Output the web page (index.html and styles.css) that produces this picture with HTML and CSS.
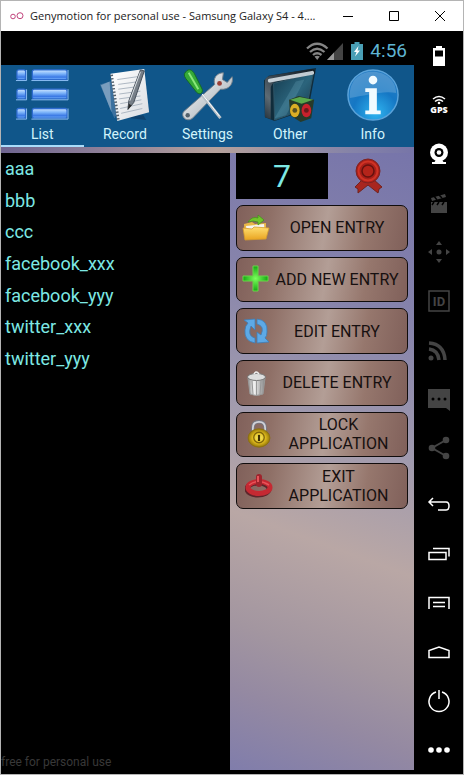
FILE: index.html
```html
<!DOCTYPE html>
<html lang="en">
<head>
<meta charset="utf-8">
<meta name="viewport" content="width=device-width, initial-scale=1">
<title>Genymotion for personal use</title>
<link rel="stylesheet" href="styles.css">
</head>
<body>
<svg class="defs" width="0" height="0" aria-hidden="true">
  <defs>
    <linearGradient id="bar" x1="0" y1="0" x2="0" y2="1"><stop offset="0" stop-color="#cfe6ff"/><stop offset=".4" stop-color="#7db4fa"/><stop offset=".75" stop-color="#3a78e4"/><stop offset="1" stop-color="#7db8ff"/></linearGradient>
    <linearGradient id="steel" x1="0" y1="0" x2="1" y2="1"><stop offset="0" stop-color="#fff"/><stop offset="1" stop-color="#9aa4ac"/></linearGradient>
    <linearGradient id="paper" x1="0" y1="0" x2="1" y2="1"><stop offset="0" stop-color="#fff"/><stop offset="1" stop-color="#d9dde2"/></linearGradient>
    <linearGradient id="glass" x1="0" y1="0" x2="1" y2="1"><stop offset="0" stop-color="#153c50"/><stop offset=".5" stop-color="#2b647c"/><stop offset="1" stop-color="#123145"/></linearGradient>
    <linearGradient id="rim" x1="0" y1="1" x2="1" y2="0"><stop offset="0" stop-color="#26333d"/><stop offset=".25" stop-color="#5d6a73"/><stop offset=".5" stop-color="#39454f"/><stop offset="1" stop-color="#101a22"/></linearGradient>
    <radialGradient id="ball" cx=".55" cy=".85" r=".9"><stop offset="0" stop-color="#2fb4f0"/><stop offset=".5" stop-color="#1577c4"/><stop offset="1" stop-color="#2b7fc4"/></radialGradient>
    <linearGradient id="folder" x1="0" y1="0" x2="0" y2="1"><stop offset="0" stop-color="#ffdf70"/><stop offset="1" stop-color="#e9a320"/></linearGradient>
    <radialGradient id="gold"><stop offset="0" stop-color="#fff06a"/><stop offset=".6" stop-color="#dcb91c"/><stop offset="1" stop-color="#94760a"/></radialGradient>
    <linearGradient id="tin" x1="0" y1="0" x2="1" y2="0"><stop offset="0" stop-color="#8e8e8e"/><stop offset=".35" stop-color="#f4f4f4"/><stop offset="1" stop-color="#858585"/></linearGradient>
    <radialGradient id="plus"><stop offset="0" stop-color="#7dff5c"/><stop offset="1" stop-color="#12a812"/></radialGradient>
  </defs>
</svg>
<div class="window">
  <header class="titlebar">
    <svg class="logo" width="14" height="10" viewBox="0 0 14 10" fill="none" stroke="#c2447c"><circle cx="3" cy="5.500" r="2.300"/><circle cx="10" cy="4.700" r="3"/></svg>
    <h1>Genymotion for personal use - Samsung Galaxy S4 - 4....</h1>
    <div class="controls">
      <button aria-label="Minimize"><svg width="12" height="12" viewBox="0 0 12 12"><path d="M1 6.500h10" stroke="#000"/></svg></button>
      <button aria-label="Maximize"><svg width="12" height="12" viewBox="0 0 12 12"><path d="M1.500 1.500h9v9h-9z" fill="none" stroke="#000"/></svg></button>
      <button aria-label="Close"><svg width="12" height="12" viewBox="0 0 12 12"><path d="M1 1l10 10M11 1L1 11" stroke="#000"/></svg></button>
    </div>
  </header>
  <div class="workspace">
    <main class="device">
      <div class="status">
        <div class="signals">
          <svg width="38" height="18" viewBox="0 0 38 18"><g fill="none" stroke="#858585" stroke-width="2.300"><path d="M1 6.500Q11 -3 21.500 6.500"/><path d="M4 10Q11 3.500 18.500 10"/><path d="M7 13Q11 9.500 15.500 13"/></g><path d="M8.500 14.500Q11 12.800 13.800 14.500L11.200 18z" fill="#858585"/><path d="M37 1v17H21z" fill="#444"/><path d="M28 10.500V18h-7z" fill="#999"/></svg>
          <svg width="12" height="18" viewBox="0 0 12 18"><path d="M3.500 0h5v2H12v16H0V2h3.500z" fill="#4a9fb5"/><path d="M7.500 4L3 10h2.500L4 14.500 9 8.500H6.500z" fill="#fff"/></svg>
        </div>
        <time>4:56</time>
      </div>
      <nav class="tabs">
        <a class="tab active" href="#list">
          <svg viewBox="0 0 56 56"><g fill="url(#bar)" stroke="#2f6cd0" stroke-width="1.300"><rect x="2" y="2" width="9" height="10" rx="2"/><rect x="18" y="2" width="36" height="10" rx="2"/><rect x="2" y="22" width="9" height="10" rx="2"/><rect x="18" y="22" width="36" height="10" rx="2"/><rect x="2" y="42" width="9" height="10" rx="2"/><rect x="18" y="42" width="36" height="10" rx="2"/></g><g fill="none" stroke="#8fc0f6" stroke-width="1"><path d="M1 13h11v-11M17 13h38v-11M1 33h11v-11M17 33h38v-11M1 53h11v-11M17 53h38v-11"/></g></svg>
          <span>List</span>
        </a>
        <a class="tab" href="#record">
          <svg viewBox="0 0 56 56"><path d="M2 17l14-4 4 35-3 4z" fill="#507ea8" opacity=".7"/><path d="M3 18l11 28-2-32z" fill="#88a9c6" opacity=".8"/><path d="M16 50l34 4-3-5z" fill="#0b355b" opacity=".6"/><path d="M13 6l35-5 5 45-33 9z" fill="url(#paper)"/><g stroke="#abb5c1" stroke-width="1"><path d="M20 12l21-3M21 17l22-3M21 22l22-3M22 27l22-3M22 32l22-3M23 37l22-4M23 42l23-5M24 47l22-5"/></g><path d="M14 7l7 47" stroke="#53606c" stroke-width="3" stroke-dasharray="1.500 2"/><path d="M44 2l4 1-11 33-6 7 1-9z" fill="#777f88" stroke="#444d57"/><path d="M44 4L33 34" stroke="#dce1e5"/><path d="M31 43l1-6 3 2z" fill="#292929"/></svg>
          <span>Record</span>
        </a>
        <a class="tab" href="#settings">
          <svg viewBox="0 0 56 56"><path d="M4 45L36 17c-2-6 2-12 9-12l-1 7 5 3 5-6c2 8-4 14-12 13L13 52c-6 5-13-2-9-7z" fill="url(#steel)" stroke="#75818b"/><circle cx="8" cy="49" r="2.300" fill="#52606b"/><circle cx="41" cy="16" r="2.500" fill="#9a3f36"/><path d="M23 28l19 24" stroke="#b8c1c8" stroke-width="3"/><path d="M23 27l18 23" stroke="#fff"/><path d="M6 4c3-4 7-2 9 2l8 16c1 5-3 6-6 3L6 11c-2-3-2-5 0-7z" fill="#35a938" stroke="#146b20"/><path d="M9 5l10 17" stroke="#8ae77b" stroke-width="2"/></svg>
          <span>Settings</span>
        </a>
        <a class="tab" href="#other">
          <svg viewBox="0 0 56 56"><path d="M1 13l5-5L55 0l-8 43-35 12-10-4z" fill="#102c3b"/><path d="M11 16L52 6l-7 36-33 12z" fill="url(#glass)" stroke="#2f5567"/><path d="M2 51V14q0-5 6-6L50 1q5 0 4 5L13 14q-5 2-5 8v31z" fill="url(#rim)"/><path d="M7 13L51 5" stroke="#dfe8ee" stroke-width="4" stroke-linecap="round" opacity=".85"/><path d="M12 52L34 14l9-2-19 37z" fill="#80c0d0" opacity=".2"/><path d="M27 33l10-4 16 4-3 19-11 4-11-7z" fill="#273a29"/><path d="M28 33l10-3 14 3-12 4z" fill="#5aa94c"/><ellipse cx="33" cy="44" rx="5" ry="7" fill="#dcae25"/><ellipse cx="45" cy="44" rx="5" ry="7" fill="#c8212c"/><circle cx="33" cy="44" r="2.500" fill="#5a5220"/><circle cx="45" cy="44" r="2.500" fill="#6b1a1c"/></svg>
          <span>Other</span>
        </a>
        <a class="tab" href="#info">
          <svg viewBox="0 0 56 56"><circle cx="28" cy="28" r="26" fill="url(#ball)" stroke="#5ba3da" stroke-width="1.500"/><path d="M4 31C3 12 15 4 28 4s24 9 24 22C39 23 19 29 4 31z" fill="#fff" opacity=".18"/><circle cx="28" cy="12.500" r="4.500" fill="#f2fbff"/><path d="M20 21h12v23h4v4H20v-4h4V25h-4z" fill="#f2fbff"/></svg>
          <span>Info</span>
        </a>
      </nav>
      <div class="content">
        <section class="entries">
          <ul>
            <li>aaa</li>
            <li>bbb</li>
            <li>ccc</li>
            <li>facebook_xxx</li>
            <li>facebook_yyy</li>
            <li>twitter_xxx</li>
            <li>twitter_yyy</li>
          </ul>
          <p>free for personal use</p>
        </section>
        <aside class="panel">
          <div class="summary">
            <output>7</output>
            <svg width="28" height="36" viewBox="0 0 28 36"><path d="M9 21L1 29l3 2v4l10-8 10 8 1-4 3-2-9-8z" fill="#a8261f" stroke="#70231f"/><circle cx="14" cy="13" r="12" fill="#a91f19" stroke="#7d2423"/><circle cx="14" cy="13" r="9.500" fill="none" stroke="#cf3325" stroke-width="2"/><circle cx="14" cy="13" r="6" fill="#b4241a" stroke="#65120e" stroke-width="1.500"/></svg>
          </div>
          <div class="actions">
            <button><svg viewBox="0 0 28 28"><path d="M2 10l8-2 3 2 11-1v8L3 25z" fill="#e9b848"/><path d="M4 12l18-2 1 10H5z" fill="#f4f4f0"/><path d="M1 14l9 1 2-2 15 1-3 11L3 26z" fill="url(#folder)" stroke="#d59c2d" stroke-width=".8"/><path d="M6 8q4-6 10-4V1l6 5-6 5V8q-5-2-10 0z" fill="#70c52b" stroke="#409319" stroke-width=".7"/></svg><span>OPEN ENTRY</span></button>
            <button><svg viewBox="0 0 28 28"><path d="M11 1h5v10h10v5H16v10h-5V16H1v-5h10z" fill="url(#plus)" stroke="#69d649"/></svg><span>ADD NEW ENTRY</span></button>
            <button><svg viewBox="0 0 28 28"><g fill="#5da9e6" stroke="#3e7eb8" stroke-width=".8"><path d="M13 26Q2 24 3 13q0-4 3-7L2 3l11-1v11l-4-4q-4 10 4 12z"/><path d="M15 2q11 1 10 13 0 4-2 6l4 4-12 1V15l4 3q4-9-4-11z"/></g></svg><span>EDIT ENTRY</span></button>
            <button><svg viewBox="0 0 28 28"><path d="M6 9h17l-2 16q-7 3-13 0z" fill="url(#tin)" stroke="#999"/><path d="M10 12l1 13M14.500 12v14M19 12l-1 13" stroke="#999"/><ellipse cx="14.500" cy="8" rx="9" ry="3.500" fill="#ddd" stroke="#777"/><path d="M12 5q2-4 5 0" fill="none" stroke="#eee" stroke-width="1.500"/></svg><span>DELETE ENTRY</span></button>
            <button class="indented"><svg viewBox="0 0 28 32"><path d="M7 15V9q0-7 7-7t7 7v6" fill="none" stroke="#777985" stroke-width="4"/><path d="M7 15V9q0-7 7-7t7 7v6" fill="none" stroke="#d1d2d9" stroke-width="2"/><ellipse cx="14" cy="20.500" rx="12.500" ry="10.500" fill="url(#gold)" stroke="#8c7010"/><circle cx="14" cy="20" r="6" fill="none" stroke="#80650b" stroke-width="1.500"/><path d="M14 17v7" stroke="#3b2d04" stroke-width="2.500"/></svg><span>LOCK APPLICATION</span></button>
            <button class="indented"><svg viewBox="0 0 28 28"><ellipse cx="13" cy="17" rx="11" ry="6" fill="none" stroke="#5e252b" stroke-width="5"/><ellipse cx="14" cy="15.500" rx="11" ry="6" fill="none" stroke="#c52932" stroke-width="5"/><path d="M4 13q9-7 20 0" fill="none" stroke="#e9535a" stroke-width="1.500"/><path d="M14 5v7" stroke="#9e242c" stroke-width="6" stroke-linecap="round"/><path d="M13 4v6" stroke="#e65359" stroke-width="2"/></svg><span>EXIT APPLICATION</span></button>
          </div>
        </aside>
      </div>
    </main>
    <nav class="tools" aria-label="Device tools">
      <button aria-label="Battery"><svg viewBox="0 0 24 24"><path d="M9 2h6v2h3v18H6V4h3z" fill="#fff"/><path d="M8 6.500h8v6H8z" fill="#000"/></svg></button>
      <button aria-label="GPS"><svg viewBox="0 0 24 24"><g fill="none" stroke="#fff" stroke-width="1.500"><path d="M6 6q6-5 12 0M8 8.500q4-3.500 8 0"/></g><circle cx="12" cy="10" r="1.300" fill="#fff"/><text x="12" y="20">GPS</text></svg></button>
      <button aria-label="Camera"><svg viewBox="0 0 24 24"><circle cx="12" cy="10.500" r="9" fill="#fff"/><circle cx="12" cy="10.500" r="4.500"/><circle cx="12" cy="10.500" r="2.300" fill="#fff"/><path d="M9 18h6l3 4H6z" fill="#fff"/><path d="M5 20h14v2H5z" fill="#fff"/></svg></button>
      <button aria-label="Record video"><svg viewBox="0 0 24 24"><path d="M4 11h16v11H4z" fill="#444"/><path d="M4 7l14-4 1 3L5 10z" fill="#444"/><path d="M7 5l3 4M12 4l3 3M7 11l-2 3M12 11l-2 3M17 11l-2 3" stroke="#000" stroke-width="1.500"/></svg></button>
      <button aria-label="Move"><svg viewBox="0 0 24 24" fill="#444"><circle cx="12" cy="12" r="2.500"/><path d="M12 1l3 4H9zM12 23l3-4H9zM1 12l4-3v6zM23 12l-4-3v6z"/></svg></button>
      <button aria-label="Identifiers"><svg viewBox="0 0 24 24"><path d="M2 2h20v20H2z" fill="none" stroke="#444" stroke-width="1.500"/><text class="id" x="12" y="17">ID</text></svg></button>
      <button aria-label="Network"><svg viewBox="0 0 24 24"><circle cx="4" cy="20" r="2.500" fill="#444"/><path d="M2 11q9 1 10 11M2 5q15 1 16 17" fill="none" stroke="#444" stroke-width="3.500"/></svg></button>
      <button aria-label="Messages"><svg viewBox="0 0 24 24"><path d="M1 2h22v22l-4-3H1z" fill="#444"/><circle cx="6" cy="12" r="1.500"/><circle cx="12" cy="12" r="1.500"/><circle cx="18" cy="12" r="1.500"/></svg></button>
      <button aria-label="Share"><svg viewBox="0 0 24 24"><path d="M19 4L5 12l14 8" fill="none" stroke="#444" stroke-width="2"/><g fill="#444"><circle cx="19" cy="4" r="3.300"/><circle cx="5" cy="12" r="3.300"/><circle cx="19" cy="20" r="3.300"/></g></svg></button>
      <button class="back" aria-label="Back"><svg viewBox="0 0 24 24"><path d="M6 5L2 9l4 4M2 9h17q3 0 3 4t-3 4H11" fill="none" stroke="#fff" stroke-width="1.500"/></svg></button>
      <button aria-label="Recent applications"><svg viewBox="0 0 24 24"><path d="M2 10.500h17v7H2zM6 6.500h16v8" fill="none" stroke="#fff" stroke-width="1.500"/></svg></button>
      <button aria-label="Menu"><svg viewBox="0 0 24 24"><path d="M2 18V6.500h20V18M6 11.500h12M6 15.500h12" fill="none" stroke="#fff" stroke-width="1.500"/></svg></button>
      <button aria-label="Home"><svg viewBox="0 0 24 24"><path d="M2 17.500v-7l10-3.500 10 3.500v7z" fill="none" stroke="#fff" stroke-width="1.500"/></svg></button>
      <button aria-label="Power"><svg viewBox="0 0 24 24"><path d="M9 3a10 10 0 1 0 6 0M12 1v9" fill="none" stroke="#fff" stroke-width="1.500"/></svg></button>
      <button aria-label="More"><svg viewBox="0 0 24 24" fill="#fff"><circle cx="4" cy="12" r="2.800"/><circle cx="12" cy="12" r="2.800"/><circle cx="20" cy="12" r="2.800"/></svg></button>
    </nav>
  </div>
</div>
</body>
</html>
```
FILE: styles.css
```css
* { box-sizing: border-box; }
body { margin: 0; font-family: Roboto, "Liberation Sans", sans-serif; }
button { border: 0; padding: 0; background: none; font: inherit; color: inherit; }
svg { display: block; flex: none; }
.defs { position: absolute; }

.window { min-height: 100vh; display: flex; flex-direction: column; border: 1px solid #b4b4b4; background: #000; }
.titlebar { height: 30px; display: flex; align-items: center; background: #fff; padding-left: 9px; }
.titlebar h1 { flex: 1; min-width: 0; margin: 0 0 0 6px; font: 11px/18px "Open Sans", sans-serif; color: #222; white-space: nowrap; }
.controls { display: flex; }
.controls button { width: 46px; height: 28px; display: grid; place-items: center; }

.workspace { flex: 1; display: flex; }
.device { flex: 1; min-width: 0; display: flex; flex-direction: column; padding-bottom: 4px; }
.status { height: 34px; display: flex; align-items: center; justify-content: flex-end; gap: 7px; padding: 5px 7px 0 0; }
.signals { display: flex; gap: 7px; }
.status time { font-size: 19px; line-height: 24px; color: #5fb4d2; }
.tabs { display: grid; grid-template-columns: repeat(5, 1fr); height: 82px; background: #10568a; }
.tab { display: flex; flex-direction: column; align-items: center; gap: 2px; padding-top: 3px; text-decoration: none; color: #d2f4fb; font-size: 14px; line-height: 20px; border-bottom: 2px solid transparent; }
.tab svg { width: 54px; height: 54px; }
.active { border-color: #a9dcfa; }

.content { flex: 1; display: grid; grid-template-columns: 229fr 184fr; padding-top: 6px; background: linear-gradient(90deg, #6f6590, #8f8098 25%, #b5a19c 52%, #8583a8 85%, #7775a8); }
.entries { display: flex; flex-direction: column; background: #000; }
.entries ul { display: grid; grid-auto-rows: 1fr; align-items: center; min-height: 222px; list-style: none; margin: 0; padding: 0 4px; color: #7de8e4; font-size: 18px; line-height: 30px; }
.entries p { margin: auto 0 0; font-size: 12px; line-height: 16px; color: #383838; }
.panel { padding: 0 6px; background: linear-gradient(200deg, #7775aa 0%, #8683ab 25%, #a09aae 45%, #b9a7a5 62%, #a396a0 78%, #9489a2 88%, #807dab 100%); }
.summary { display: grid; grid-template-columns: 92px 1fr; place-items: center; height: 46px; margin-bottom: 6px; }
.summary output { width: 100%; height: 100%; display: grid; place-items: center; background: #000; color: #7de8e4; font-size: 32px; }
.actions { display: grid; grid-auto-rows: 1fr; gap: 6px; min-height: 304px; }
.actions button { display: flex; align-items: center; padding: 0 3px 0 5px; border: 1px solid #100c0c; border-radius: 7px; background: linear-gradient(100deg, #80605a, #8f7067 20%, #b39e96 52%, #96776d 75%, #80605a); color: #171010; font-size: 16px; line-height: 19px; }
.actions svg { width: 28px; height: 28px; }
.actions span { flex: 1; text-align: center; }
.actions .indented { padding-left: 8px; }

.tools { width: 49px; display: flex; flex-direction: column; background: #000; }
.tools button { height: 49px; display: grid; place-items: center; }
.tools svg { width: 24px; height: 24px; }
.tools text { font: 900 9px "Open Sans", sans-serif; text-anchor: middle; fill: #fff; }
.tools .id { font: bold 13px Roboto, sans-serif; fill: #444; }
.tools .back { margin-top: 8px; }
```
